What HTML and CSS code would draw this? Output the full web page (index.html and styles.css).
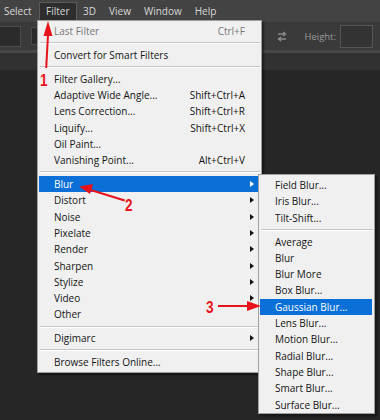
FILE: index.html
```html
<!DOCTYPE html>
<html>
<head>
<meta charset="utf-8">
<link rel="stylesheet" href="styles.css">
</head>
<body>
<div class="app">
  <div class="menubar">
    <span class="mb-item first">Select</span>
    <span class="mb-item active">Filter</span>
    <span class="mb-item">3D</span>
    <span class="mb-item">View</span>
    <span class="mb-item">Window</span>
    <span class="mb-item">Help</span>
  </div>
  <div class="options">
    <div class="opt-box small"></div>
    <div class="opt-box mid"></div>
    <div class="opt-spacer"></div>
    <div class="opt-box tiny"></div>
    <svg class="swap" width="12" height="11" viewBox="0 0 12 11">
      <path d="M2 3h7M7 1l2.5 2L7 5" fill="none" stroke="#8a8a8a" stroke-width="1.4"/>
      <path d="M10 8H3M5 6L2.5 8 5 10" fill="none" stroke="#8a8a8a" stroke-width="1.4"/>
    </svg>
    <span class="opt-label">Height:</span>
    <div class="opt-box field"></div>
  </div>
  <div class="tabs"></div>
  <div class="workspace"></div>
</div>

<div class="menu main-menu">
  <div class="mi disabled"><span>Last Filter</span><span class="sc">Ctrl+F</span></div>
  <div class="sep"></div>
  <div class="mi"><span>Convert for Smart Filters</span></div>
  <div class="sep"></div>
  <div class="mi"><span>Filter Gallery...</span></div>
  <div class="mi"><span>Adaptive Wide Angle...</span><span class="sc">Shift+Ctrl+A</span></div>
  <div class="mi"><span>Lens Correction...</span><span class="sc">Shift+Ctrl+R</span></div>
  <div class="mi"><span>Liquify...</span><span class="sc">Shift+Ctrl+X</span></div>
  <div class="mi"><span>Oil Paint...</span></div>
  <div class="mi"><span>Vanishing Point...</span><span class="sc">Alt+Ctrl+V</span></div>
  <div class="sep"></div>
  <div class="mi sub hl"><span>Blur</span></div>
  <div class="mi sub"><span>Distort</span></div>
  <div class="mi sub"><span>Noise</span></div>
  <div class="mi sub"><span>Pixelate</span></div>
  <div class="mi sub"><span>Render</span></div>
  <div class="mi sub"><span>Sharpen</span></div>
  <div class="mi sub"><span>Stylize</span></div>
  <div class="mi sub"><span>Video</span></div>
  <div class="mi"><span>Other</span></div>
  <div class="sep"></div>
  <div class="mi sub"><span>Digimarc</span></div>
  <div class="sep"></div>
  <div class="mi"><span>Browse Filters Online...</span></div>
</div>

<div class="menu sub-menu">
  <div class="mi"><span>Field Blur...</span></div>
  <div class="mi"><span>Iris Blur...</span></div>
  <div class="mi"><span>Tilt-Shift...</span></div>
  <div class="sep"></div>
  <div class="mi"><span>Average</span></div>
  <div class="mi"><span>Blur</span></div>
  <div class="mi"><span>Blur More</span></div>
  <div class="mi"><span>Box Blur...</span></div>
  <div class="mi hl"><span>Gaussian Blur...</span></div>
  <div class="mi"><span>Lens Blur...</span></div>
  <div class="mi"><span>Motion Blur...</span></div>
  <div class="mi"><span>Radial Blur...</span></div>
  <div class="mi"><span>Shape Blur...</span></div>
  <div class="mi"><span>Smart Blur...</span></div>
  <div class="mi"><span>Surface Blur...</span></div>
</div>

<svg class="annot" width="380" height="420" viewBox="0 0 380 420">
  <g fill="#e8121b" stroke="none">
    <path d="M45.2 68 L47 35 L49 35 L47.2 68 Z"/>
    <polygon points="48,21 43.5,36 52.5,36"/>
    <text class="num" transform="translate(40 86) scale(0.85 1)">1</text>

    <path d="M91 189 L125 199.5 L124.4 201.6 L90.4 191 Z"/>
    <polygon points="79,186.5 93,184 90,194"/>
    <text class="num" transform="translate(125 210.5) scale(0.85 1)">2</text>

    <rect x="218" y="305" width="32" height="2"/>
    <polygon points="261,306 247,301 247,311"/>
    <text class="num" transform="translate(206 313) scale(0.85 1)">3</text>
  </g>
</svg>
</body>
</html>
```

FILE: styles.css
```css
html, body {
  margin: 0;
  padding: 0;
}
body {
  width: 380px;
  height: 420px;
  overflow: hidden;
  position: relative;
  background: #262626;
  font-family: "Open Sans", "Noto Sans", sans-serif;
}
.app {
  display: flex;
  flex-direction: column;
  height: 420px;
}
.menubar {
  height: 22px;
  background: #434343;
  display: flex;
  align-items: center;
  padding-left: 3px;
  font-size: 10px;
  color: #d8d8d8;
}
.mb-item {
  padding: 0 5.5px;
  line-height: 17px;
  border: 1px solid transparent;
}
.mb-item.first {
  padding-left: 0;
  margin-right: 1px;
}
.mb-item.active {
  background: #2d2d2d;
  border-color: #5a5a5a;
  border-bottom-color: transparent;
  padding: 0 6px;
}
.options {
  height: 28px;
  background: #3a3a3a;
  border-bottom: 3px solid #474747;
  display: flex;
  align-items: center;
}
.opt-box {
  background: #2b2b2b;
  border: 1px solid #4c4c4c;
}
.opt-box.small {
  width: 20px;
  height: 19px;
  margin-left: -1px;
}
.opt-box.mid {
  width: 30px;
  height: 16px;
  margin-left: 10px;
}
.opt-spacer {
  flex: 1;
}
.opt-box.tiny {
  width: 17px;
  height: 22px;
  border-left: none;
}
.swap {
  margin-left: 15px;
}
.opt-label {
  margin-left: 16px;
  font-size: 9.5px;
  color: #9a9a9a;
}
.opt-box.field {
  width: 31px;
  height: 21px;
  margin-left: 4px;
  margin-right: 7px;
  background: #333333;
  border-color: #555555;
}
.tabs {
  height: 17px;
  background: #313131;
}
.workspace {
  flex: 1;
  background: #262626;
}

.menu {
  position: absolute;
  background: #f0f0f0;
  border: 1px solid #a0a0a0;
  box-shadow: 2px 2px 2px rgba(0, 0, 0, 0.45);
  font-size: 10px;
  color: #141414;
  box-sizing: border-box;
}
.main-menu {
  left: 37px;
  top: 20px;
  width: 225px;
  padding: 2px 2px 2px 1px;
}
.sub-menu {
  left: 258px;
  top: 174px;
  width: 117px;
  padding: 2px 2px 0 1px;
}
.mi {
  height: 16.3px;
  display: flex;
  align-items: center;
  justify-content: space-between;
  padding-left: 15px;
  padding-right: 14px;
  position: relative;
  white-space: nowrap;
}
.mi.disabled {
  color: #777777;
}
.mi.hl {
  background: #0a6fd6;
  color: #ffffff;
}
.mi.sub::after {
  content: "";
  position: absolute;
  right: 5px;
  top: 50%;
  margin-top: -3px;
  border-left: 4px solid #111111;
  border-top: 3px solid transparent;
  border-bottom: 3px solid transparent;
}
.mi.sub.hl::after {
  border-left-color: #ffffff;
}
.sep {
  height: 7.5px;
  position: relative;
}
.sep::before {
  content: "";
  position: absolute;
  left: 1px;
  right: -1px;
  top: 3px;
  height: 1px;
  background: #c4c4c4;
  border-bottom: 1px solid #ffffff;
}
.annot {
  position: absolute;
  left: 0;
  top: 0;
  pointer-events: none;
}
.num {
  font-family: "Liberation Sans", sans-serif;
  font-weight: bold;
  font-size: 16px;
}
```
